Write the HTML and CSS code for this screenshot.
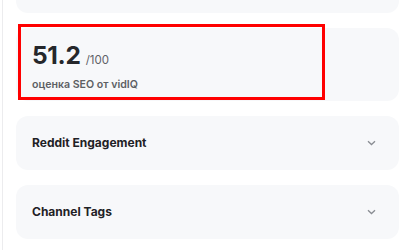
FILE: index.html
```html
<!DOCTYPE html>
<html>
<head>
<meta charset="utf-8">
<link rel="stylesheet" href="styles.css">
</head>
<body>
<div class="page">
  <div class="card card-top"></div>
  <div class="card card-score">
    <div class="score-row"><span class="score">51.2</span><span class="max">/100</span></div>
    <div class="score-label">оценка SEO от vidIQ</div>
    <div class="highlight"></div>
  </div>
  <div class="card card-acc">
    <span class="acc-title">Reddit Engagement</span>
    <svg class="chev" width="9" height="6" viewBox="0 0 9 6"><path d="M1 1.2 L4.5 4.5 L8 1.2" fill="none" stroke="#8a8d93" stroke-width="1.3"/></svg>
  </div>
  <div class="card card-acc">
    <span class="acc-title">Channel Tags</span>
    <svg class="chev" width="9" height="6" viewBox="0 0 9 6"><path d="M1 1.2 L4.5 4.5 L8 1.2" fill="none" stroke="#8a8d93" stroke-width="1.3"/></svg>
  </div>
</div>
</body>
</html>
```
FILE: styles.css
```css
html, body {
  margin: 0;
  padding: 0;
  background: #ffffff;
  font-family: Inter, "Noto Sans", sans-serif;
}
.page {
  margin-left: 2px;
  border-left: 1px solid #ececee;
  padding: 0 13px 0 13px;
  height: 250px;
  display: flex;
  flex-direction: column;
  gap: 15px;
  box-sizing: border-box;
}
.card {
  background: #f7f8fa;
  border-radius: 12px;
}
.card-top {
  height: 13px;
  border-radius: 0 0 12px 12px;
}
.card-score {
  position: relative;
  height: 73px;
  padding: 15px 16px 0 16px;
  box-sizing: border-box;
}
.score-row {
  display: flex;
  align-items: baseline;
  gap: 5px;
  height: 24px;
}
.score {
  font-size: 24.5px;
  font-weight: 700;
  color: #25272b;
  line-height: 24px;
  letter-spacing: -0.3px;
}
.max {
  font-size: 11.5px;
  font-weight: 400;
  color: #5f6167;
}
.score-label {
  margin-top: 11px;
  font-size: 10.6px;
  font-weight: 600;
  color: #5d5f64;
  line-height: 13px;
}
.highlight {
  position: absolute;
  left: 2px;
  top: -4px;
  width: 307px;
  height: 76px;
  border: 3px solid #ff0000;
  box-sizing: border-box;
}
.card-acc {
  height: 54px;
  padding: 0 23px 0 16px;
  display: flex;
  align-items: center;
  justify-content: space-between;
  box-sizing: border-box;
}
.acc-title {
  font-size: 12px;
  font-weight: 700;
  color: #1f2125;
  padding-bottom: 1px;
}
.chev {
  display: block;
}
```
